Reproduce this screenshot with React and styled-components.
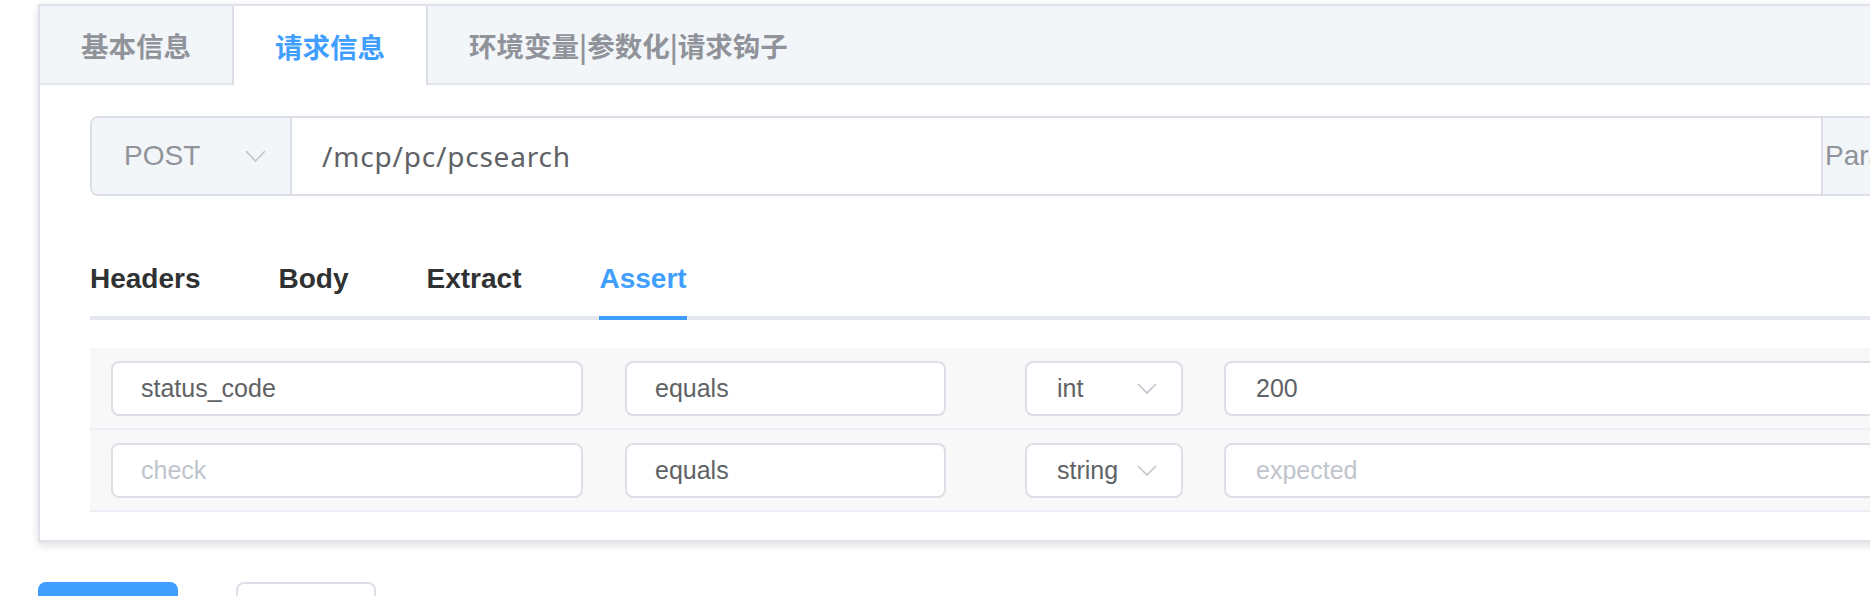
import React from "react";
import styled, { createGlobalStyle } from "styled-components";

const GlobalStyle = createGlobalStyle`
  body {
    margin: 0;
    background: #ffffff;
    overflow: hidden;
    font-family: "Liberation Sans", "Noto Sans CJK SC", sans-serif;
  }
`;

const Page = styled.div`
  padding: 4px 0 0 38px;
  width: 2100px;
`;

const Card = styled.div`
  border: 2px solid #dfe2e8;
  background: #fff;
  box-shadow: 0 4px 8px 0 rgba(0, 0, 0, 0.1), 0 0 12px 0 rgba(0, 0, 0, 0.04);
`;

const TabBar = styled.div`
  display: flex;
  height: 77px;
  background: #f3f6f9;
  border-bottom: 2px solid #e2e5ec;
`;

const Tab = styled.div`
  display: flex;
  align-items: center;
  padding: 0 41px;
  margin-right: -2px;
  font-size: 27.5px;
  font-weight: 600;
  font-family: "Noto Sans CJK SC", sans-serif;
  color: ${(p) => (p.$active ? "#409eff" : "#909399")};
  background: ${(p) => (p.$active ? "#fff" : "transparent")};
  border-left: 2px solid ${(p) => (p.$active ? "#dcdfe6" : "transparent")};
  border-right: 2px solid ${(p) => (p.$active ? "#dcdfe6" : "transparent")};
  height: ${(p) => (p.$active ? "79px" : "77px")};
  &:first-child {
    border-left: none;
  }
`;

const Content = styled.div`
  padding: 31px 0 28px 50px;
`;

const UrlGroup = styled.div`
  display: flex;
  height: 80px;
  box-sizing: border-box;
  border: 2px solid #dcdfe6;
  border-radius: 8px;
  overflow: hidden;
  font-size: 28px;
`;

const MethodSelect = styled.div`
  width: 200px;
  flex: none;
  display: flex;
  align-items: center;
  justify-content: space-between;
  box-sizing: border-box;
  padding: 0 24px 0 32px;
  background: #f3f6f9;
  border-right: 2px solid #dcdfe6;
  color: #909399;
`;

const UrlText = styled.div`
  flex: 1;
  display: flex;
  align-items: center;
  padding-left: 30px;
  font-family: "Noto Sans", "Liberation Sans", sans-serif;
  font-size: 28px;
  letter-spacing: 0.8px;
  color: #606266;
`;

const Append = styled.div`
  width: 309px;
  flex: none;
  display: flex;
  align-items: center;
  padding-left: 2px;
  background: #f3f6f9;
  border-left: 2px solid #dcdfe6;
  color: #909399;
`;

const SubTabs = styled.div`
  display: flex;
  height: 74px;
  margin-top: 46px;
  border-bottom: 4px solid #e4e7ed;
`;

const SubTab = styled.div`
  position: relative;
  display: flex;
  align-items: center;
  padding: 0 39px;
  font-size: 28px;
  font-weight: 700;
  color: ${(p) => (p.$active ? "#409eff" : "#303133")};
  &:first-child {
    padding-left: 0;
  }
  &:last-child {
    padding-right: 0;
  }
  ${(p) =>
    p.$active &&
    `
    &::after {
      content: "";
      position: absolute;
      left: 39px;
      right: 0;
      bottom: -4px;
      height: 4px;
      background: #409eff;
    }
  `}
`;

const Table = styled.div`
  margin-top: 28px;
  background: #f8f8f9;
`;

const Row = styled.div`
  display: flex;
  align-items: center;
  padding: 13px 0 12px 21px;
  border-bottom: 2px solid #ebeef5;
`;

const Field = styled.div`
  box-sizing: border-box;
  height: 55px;
  width: ${(p) => p.$w};
  margin-right: ${(p) => p.$gap || "0"};
  flex: ${(p) => (p.$grow ? "1" : "none")};
  display: flex;
  align-items: center;
  justify-content: space-between;
  padding: 0 24px 0 ${(p) => p.$pl || "28px"};
  background: #fff;
  border: 2px solid #dcdfe6;
  border-radius: 8px;
  font-size: 25px;
  color: ${(p) => (p.$placeholder ? "#c0c4cc" : "#606266")};
`;

const Buttons = styled.div`
  display: flex;
  gap: 58px;
  margin-top: 40px;
`;

const Button = styled.div`
  width: 140px;
  height: 80px;
  box-sizing: border-box;
  border-radius: 8px;
  background: ${(p) => (p.$primary ? "#409eff" : "#fff")};
  border: 2px solid ${(p) => (p.$primary ? "#409eff" : "#dcdfe6")};
`;

const Chevron = ({ w = 21, h = 12 }) => (
  <svg width={w} height={h} viewBox={`0 0 ${w} ${h}`} fill="none">
    <polyline
      points={`1,1 ${w / 2},${h - 1} ${w - 1},1`}
      stroke="#c0c4cc"
      strokeWidth="1.6"
    />
  </svg>
);

const rows = [
  { check: "status_code", type: "int", expected: "200" },
  { check: "", type: "string", expected: "" },
];

export default function App() {
  return (
    <Page>
      <GlobalStyle />
      <Card>
        <TabBar>
          <Tab>基本信息</Tab>
          <Tab $active>请求信息</Tab>
          <Tab>环境变量|参数化|请求钩子</Tab>
        </TabBar>
        <Content>
          <UrlGroup>
            <MethodSelect>
              POST
              <Chevron />
            </MethodSelect>
            <UrlText>/mcp/pc/pcsearch</UrlText>
            <Append>Params</Append>
          </UrlGroup>

          <SubTabs>
            <SubTab>Headers</SubTab>
            <SubTab>Body</SubTab>
            <SubTab>Extract</SubTab>
            <SubTab $active>Assert</SubTab>
          </SubTabs>

          <Table>
            {rows.map((r, i) => (
              <Row key={i}>
                <Field $w="472px" $gap="42px" $placeholder={!r.check}>
                  {r.check || "check"}
                </Field>
                <Field $w="321px" $gap="79px">
                  equals
                </Field>
                <Field $w="158px" $gap="41px" $pl="30px">
                  {r.type}
                  <Chevron w={20} h={11} />
                </Field>
                <Field $grow $pl="30px" $placeholder={!r.expected}>
                  {r.expected || "expected"}
                </Field>
              </Row>
            ))}
          </Table>
        </Content>
      </Card>
      <Buttons>
        <Button $primary />
        <Button />
      </Buttons>
    </Page>
  );
}
